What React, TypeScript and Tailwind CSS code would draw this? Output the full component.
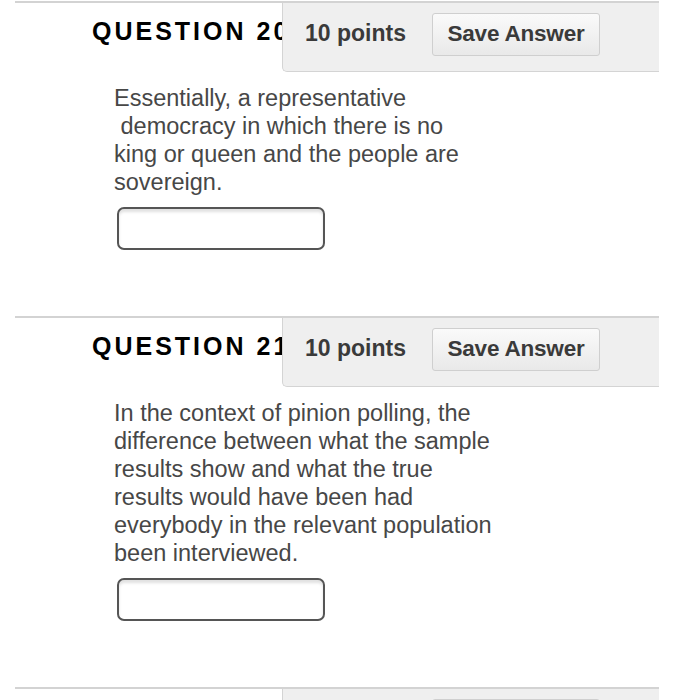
import React from "react";

const font = { fontFamily: '"Liberation Sans", Arial, Helvetica, sans-serif' };

function Header({ num, showText = true }: { num?: string; showText?: boolean }) {
  return (
    <div className="flex h-[69px]">
      <div className="w-[267px] overflow-hidden whitespace-nowrap pl-[77px] pt-[16px]">
        {num ? (
          <span className="block text-[25px] font-bold tracking-[3px] text-black leading-[24px]">
            QUESTION {num}
          </span>
        ) : null}
      </div>
      <div className="flex-1 flex items-start bg-[#efefef] border-l border-b border-[#d4d4d4] rounded-bl-[5px] pl-[22px] pt-[10px]">
        <span className="mt-[9px] w-[101px] h-[23px] text-[23px] font-bold text-[#3a3a3a] leading-none whitespace-nowrap">
          {showText ? "10 points" : ""}
        </span>
        <button className="ml-[26px] w-[168px] h-[43px] rounded-[3px] border border-[#cfcfcf] bg-gradient-to-b from-[#fafafa] to-[#e9e9e9] text-[22.5px] font-bold text-[#3a3a3a] tracking-[-0.2px] leading-none">
          {showText ? "Save Answer" : ""}
        </button>
      </div>
    </div>
  );
}

function Block({ num, lines }: { num: string; lines: string[] }) {
  return (
    <section className="ml-[15px] mr-[28px] border-t-2 border-[#d3d3d3]">
      <Header num={num} />
      <div className="pl-[99px] pt-[12px] text-[23.5px] leading-[28px] text-[#474747] whitespace-pre">
        {lines.map((l, i) => (
          <div key={i}>{l}</div>
        ))}
      </div>
      <div className="ml-[102px] mt-[11px] w-[208px] h-[43px] rounded-[7px] border-2 border-[#555] bg-white shadow-[inset_0_3px_3px_rgba(0,0,0,0.12)]" />
      <div className="h-[66px]" />
    </section>
  );
}

export default function App() {
  return (
    <div className="w-[687px] h-[700px] overflow-hidden bg-white pt-[1px]" style={font}>
      <Block
        num="20"
        lines={[
          "Essentially, a representative",
          " democracy in which there is no",
          "king or queen and the people are",
          "sovereign.",
        ]}
      />
      <Block
        num="21"
        lines={[
          "In the context of pinion polling, the",
          "difference between what the sample",
          "results show and what the true",
          "results would have been had",
          "everybody in the relevant population",
          "been interviewed.",
        ]}
      />
      <section className="ml-[15px] mr-[28px] border-t-2 border-[#d3d3d3]">
        <Header showText={false} />
      </section>
    </div>
  );
}
